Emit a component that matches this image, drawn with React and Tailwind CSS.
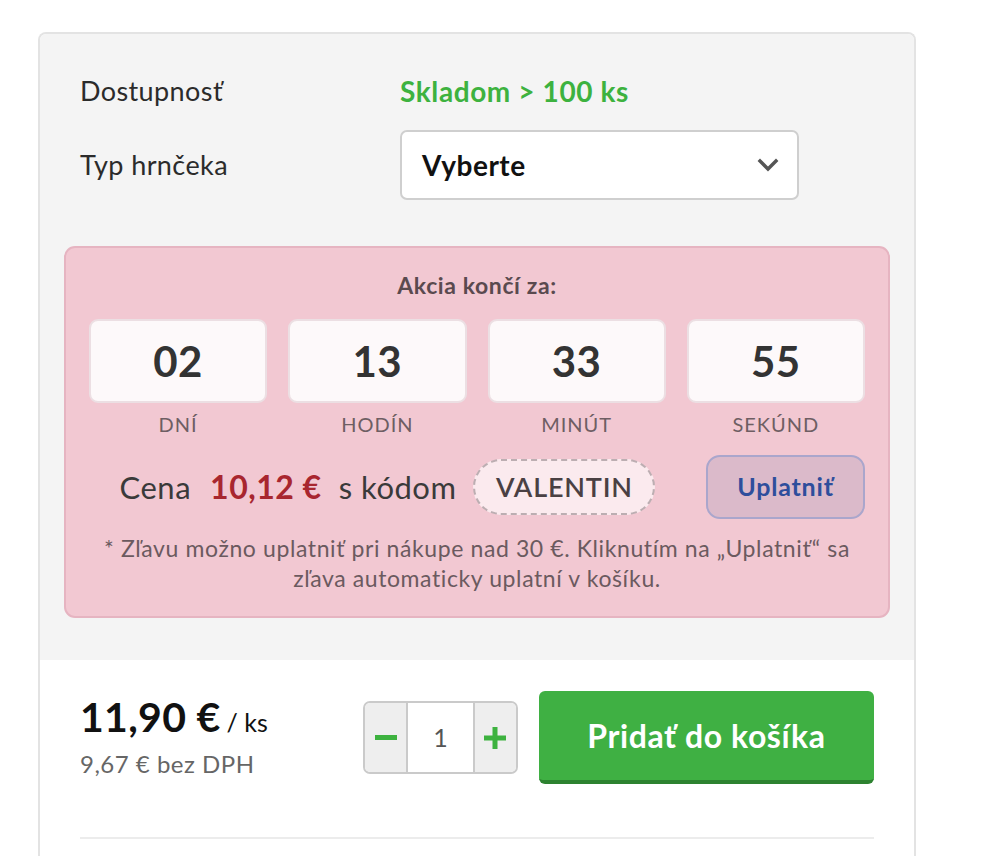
import { useState } from 'react'

const font = { fontFamily: 'Lato, "Noto Sans", sans-serif' }

const countdown = [
  { value: '02', label: 'Dní' },
  { value: '13', label: 'Hodín' },
  { value: '33', label: 'Minút' },
  { value: '55', label: 'Sekúnd' },
]

function App() {
  const [qty, setQty] = useState(1)

  return (
    <main className="min-h-screen bg-white pl-[38px] pt-[32px]" style={font}>
      <div className="w-[878px] overflow-hidden rounded-t-[8px] border-2 border-b-0 border-[#e3e3e3]">
        <section className="bg-[#f4f4f4] px-[24px] pb-[42px] pt-[40px]">
          <div className="flex h-[34px] items-center pl-[16px]">
            <span className="w-[320px] text-[27px] tracking-[0.4px] text-[#2b2b2b]">Dostupnosť</span>
            <span className="text-[28px] font-bold tracking-[0.6px] text-[#3db23f]">Skladom &gt; 100 ks</span>
          </div>
          <div className="mt-[22px] flex items-center pl-[16px]">
            <span className="w-[320px] text-[27px] tracking-[0.4px] text-[#2b2b2b]">Typ hrnčeka</span>
            <button className="flex h-[70px] w-[399px] items-center justify-between rounded-[7px] border-2 border-[#cfcfcf] bg-white pl-[20px] pr-[18px]">
              <span className="text-[28px] font-bold tracking-[0.5px] text-[#111]">Vyberte</span>
              <svg width="22" height="14" viewBox="0 0 22 14" fill="none">
                <path d="M3 3l8 8 8-8" stroke="#555" strokeWidth="3.4" strokeLinecap="square" />
              </svg>
            </button>
          </div>

          <div className="mt-[46px] rounded-[11px] border-2 border-[#e6b4c1] bg-[#f2c8d2] px-[23px] pb-[23px] pt-[22px]">
            <p className="text-center text-[23px] font-bold leading-[30px] tracking-[0.6px] text-[#5a4a4f]">Akcia končí za:</p>
            <div className="mt-[19px] grid grid-cols-4 gap-[21px]">
              {countdown.map((item) => (
                <div key={item.label} className="flex flex-col items-center">
                  <div className="flex h-[84px] w-full items-center justify-center rounded-[9px] border-2 border-[#ecdfe3] bg-[#fdf9fa] text-[42px] font-bold tracking-[0.5px] text-[#333]">
                    {item.value}
                  </div>
                  <span className="mt-[8px] text-[20px] uppercase leading-[26px] tracking-[1px] text-[#6e5e63]">{item.label}</span>
                </div>
              ))}
            </div>

            <div className="mt-[18px] flex items-center">
              <div className="flex flex-1 items-center justify-center tracking-[0.5px]">
                <span className="text-[31px] text-[#3a3a3a]">Cena</span>
                <span className="ml-[19px] text-[32px] font-bold text-[#a8262f]">10,12 €</span>
                <span className="ml-[17px] text-[31px] text-[#3a3a3a]">s kódom</span>
                <span className="ml-[17px] flex h-[56px] w-[182px] items-center justify-center rounded-full border-2 border-dashed border-[#bcaeb2] bg-[#fbeaee] text-[27px] font-semibold tracking-[0.8px] text-[#4a4043]">
                  VALENTIN
                </span>
              </div>
              <button className="ml-[20px] h-[64px] w-[159px] rounded-[14px] border-2 border-[#aaa6cc] bg-[#dbbaca] text-[25px] font-bold tracking-[0.8px] text-[#2e4e9c]">
                Uplatniť
              </button>
            </div>

            <p className="mt-[14px] text-center text-[23px] leading-[30px] tracking-[0.6px] text-[#6b5a5f]">
              * Zľavu možno uplatniť pri nákupe nad 30 €. Kliknutím na „Uplatniť“ sa zľava automaticky uplatní v košíku.
            </p>
          </div>
        </section>

        <section className="bg-white px-[40px] pt-[31px]">
          <div className="flex items-start">
            <div className="w-[284px] pt-[4px]">
              <p className="leading-[44px] text-[#111]">
                <span className="text-[41px] font-bold tracking-[0.3px]">11,90 €</span>
                <span className="ml-[6px] text-[25px]">/ ks</span>
              </p>
              <p className="mt-[2px] text-[24px] leading-[28px] tracking-[0.5px] text-[#666]">9,67 € bez DPH</p>
            </div>
            <div className="mt-[10px] flex h-[73px] w-[155px] overflow-hidden rounded-[7px] border-2 border-[#cacaca]">
              <button onClick={() => setQty(Math.max(1, qty - 1))} className="flex w-[43px] items-center justify-center border-r-2 border-[#cacaca] bg-[#eeeeee]">
                <span className="block h-[5px] w-[22px] bg-[#3db23f]" />
              </button>
              <div className="flex flex-1 items-center justify-center bg-white text-[25px] text-[#555]">{qty}</div>
              <button onClick={() => setQty(qty + 1)} className="flex w-[43px] items-center justify-center border-l-2 border-[#cacaca] bg-[#eeeeee]">
                <svg width="22" height="22" viewBox="0 0 22 22">
                  <path d="M8.5 0h5v8.5H22v5h-8.5V22h-5v-8.5H0v-5h8.5z" fill="#3db23f" />
                </svg>
              </button>
            </div>
            <button className="ml-[21px] h-[93px] w-[336px] rounded-[6px] border-b-[4px] border-[#2d8230] bg-[#3fb043] text-[32px] font-bold tracking-[0.6px] text-white">
              Pridať do košíka
            </button>
          </div>
          <div className="mt-[53px] h-[2px] bg-[#ececec]" />
          <div className="h-[20px]" />
        </section>
      </div>
    </main>
  )
}

export default App
